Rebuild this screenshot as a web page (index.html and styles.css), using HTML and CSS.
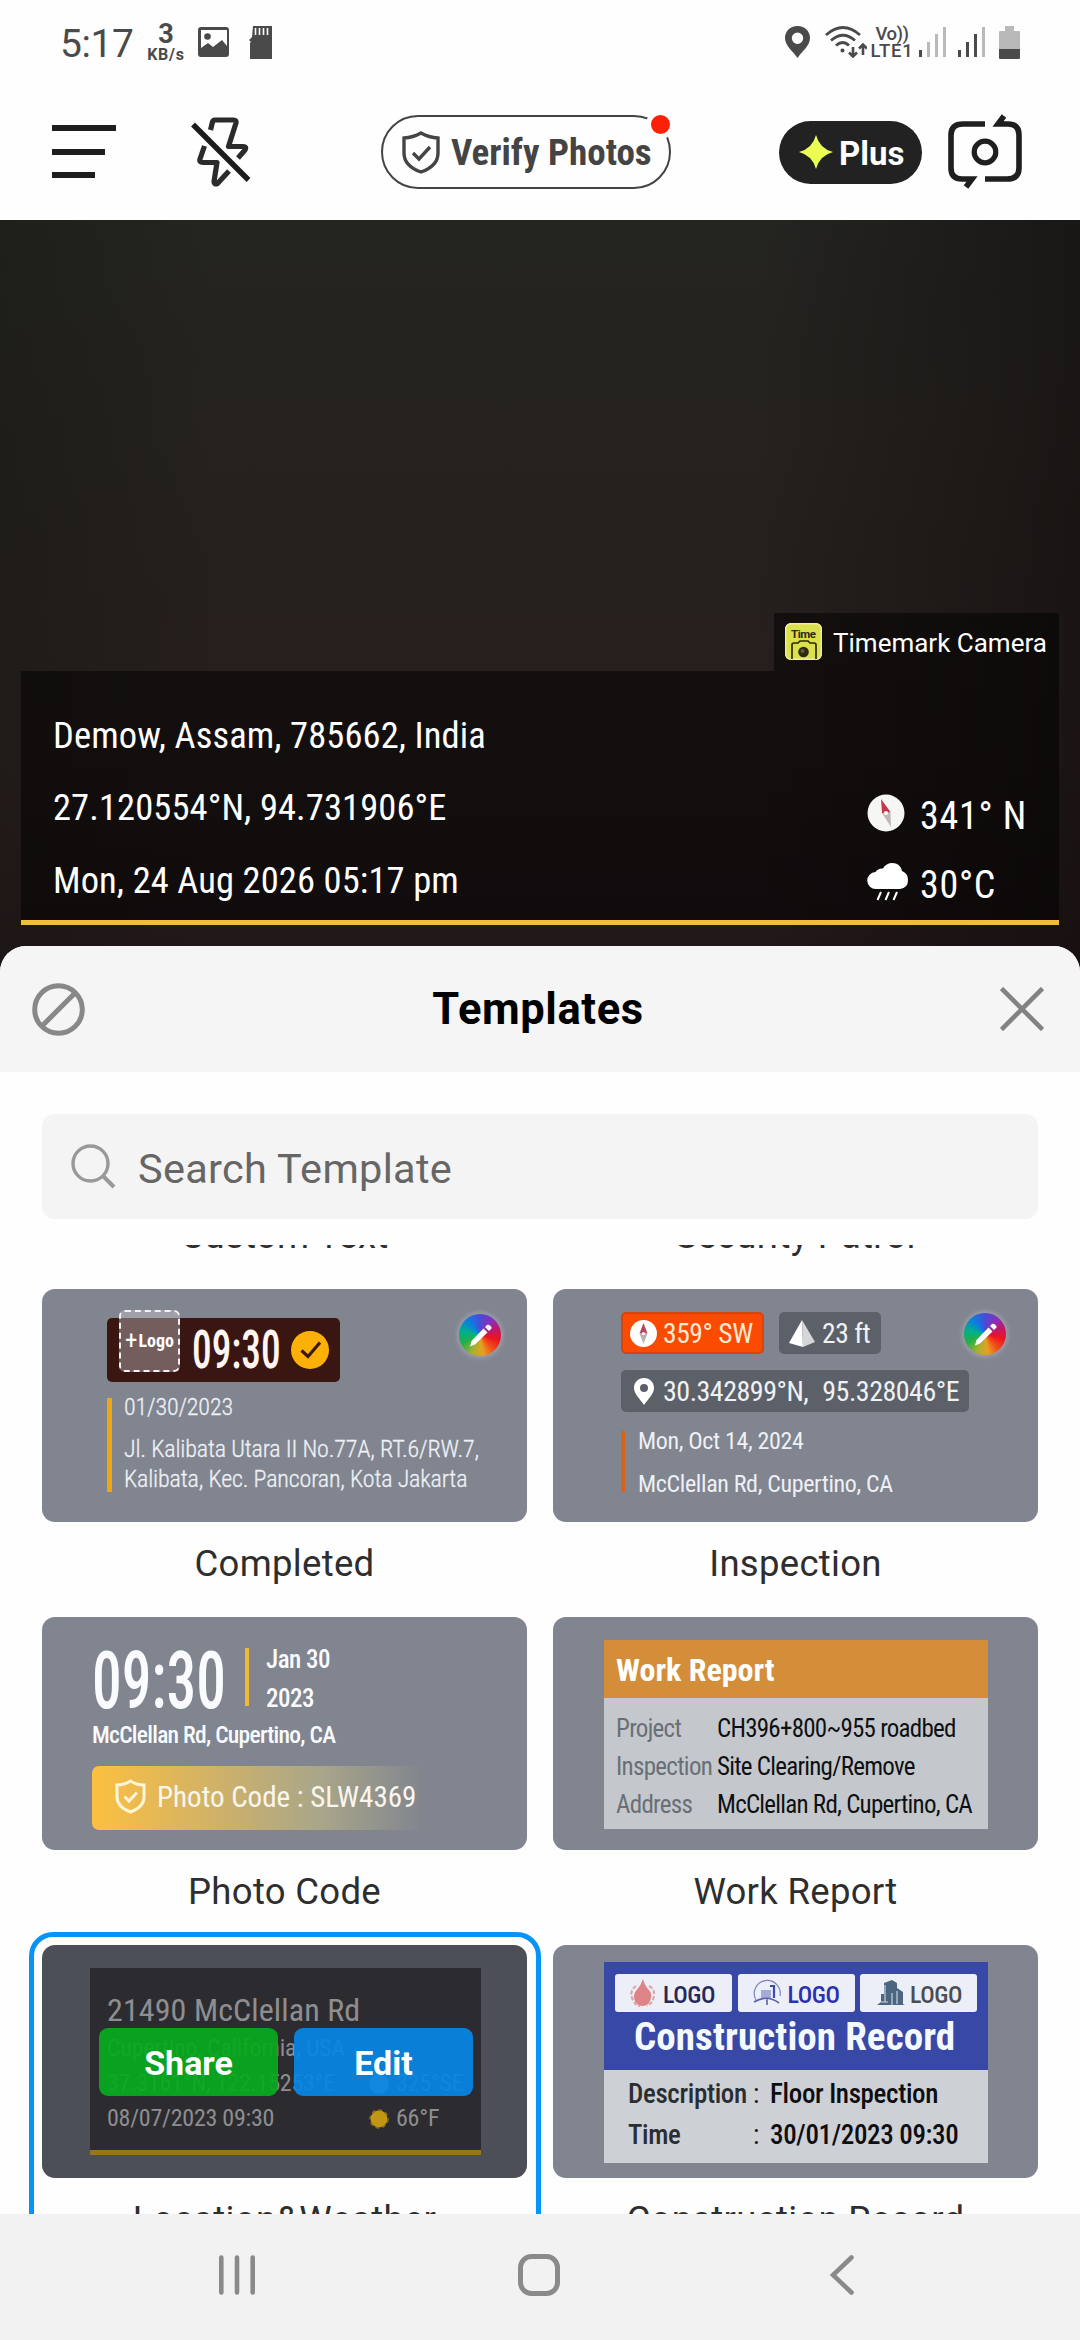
FILE: index.html
```html
<!DOCTYPE html>
<html lang="en">
<head>
<meta charset="utf-8">
<title>Templates</title>
<link rel="stylesheet" href="styles.css">
</head>
<body>
<div class="statusbar">
  <span class="time">5:17</span>
  <span class="net"><b>3</b><i>KB/s</i></span>
  <svg class="st-img" width="31" height="30" viewBox="0 0 31 30"><path fill="#4a4a4a" fill-rule="evenodd" d="M3 0h25q3 0 3 3v24q0 3-3 3H3q-3 0-3-3V3q0-3 3-3zM3 3v18l7-5 5 4 9-7 5 6V3z"/><circle cx="9.500" cy="9.500" r="3.300" fill="#4a4a4a"/></svg>
  <svg class="st-sd" width="23" height="33" viewBox="0 0 23 33"><path fill="#4a4a4a" d="M4 0h19v33H1V17l1-1-2-2 3-3z"/><path stroke="#fff" stroke-width="1.600" d="M6.500 2v7M10.500 2v7M14.500 2v7M18.500 2v7"/></svg>
  <svg class="st-pin" width="25" height="32" viewBox="0 0 25 32"><path fill="#4a4a4a" fill-rule="evenodd" d="M12.500 0C5 0 0 5.500 0 12c0 8 8 13 12.500 20C17 25 25 20 25 12 25 5.500 20 0 12.500 0zm0 6.500a5.700 5.700 0 1 1 0 11.400 5.700 5.700 0 0 1 0-11.400z"/></svg>
  <svg class="st-wifi" width="42" height="32" viewBox="0 0 42 32" fill="none" stroke="#4a4a4a" stroke-width="2.800"><path d="M1 9q17-15 34 0M6 14.500q12-10.500 24 0M11 19.500q7-6 13 0"/><circle cx="17.500" cy="24.500" r="1.300" fill="#4a4a4a" stroke-width="1.500"/><path stroke-width="2.600" d="M28 21v9M24 26.500l4 4 4-4M38 29V19M34 22.500l4-4 4 4"/></svg>
  <span class="volte"><i>Vo))</i><i>LTE1</i></span>
  <svg class="st-sig" width="28" height="30" viewBox="0 0 28 30"><path fill="#4a4a4a" d="M0 23h3v7H0z"/><path fill="#b9b9b9" d="M8 15h3v15H8zM16 7h3v23h-3zM24 0h3v30h-3z"/></svg>
  <svg class="st-sig2" width="28" height="30" viewBox="0 0 28 30"><path fill="#4a4a4a" d="M0 23h3v7H0zM8 15h3v15H8zM16 7h3v23h-3z"/><path fill="#b9b9b9" d="M24 0h3v30h-3z"/></svg>
  <svg class="st-bat" width="21" height="33" viewBox="0 0 21 33"><path fill="#b9b9b9" d="M6 0h9v5h5q1 0 1 1v17H0V6q0-1 1-1h5z"/><path fill="#4a4a4a" d="M0 23h21v9q0 1-1 1H1q-1 0-1-1z"/></svg>
</div>

<header class="topbar">
  <svg class="menu" width="64" height="54" viewBox="0 0 64 54"><path fill="#1e1e1e" d="M0 0h64v6H0zM0 24h53v6H0zM0 47h43v6H0z"/></svg>
  <svg class="flash" width="60" height="70" viewBox="0 0 60 70" fill="none" stroke="#2b2b2b" stroke-width="5.200" stroke-linejoin="round"><path d="M19.500 13l2-8Q22 3 24 3h18.500q3 0 2.500 3L37.500 29.500H52q4 0 2 3.500l-7 8M13.500 29L9 42q-1 3.500 3 3.500h14l-3 19q0 3.500 3.500 2L38 54"/><path stroke="#1c1c1c" stroke-width="5.400" d="M2 7.500L57.500 63"/></svg>
  <div class="verify">
    <svg width="38" height="43" viewBox="0 0 38 43" fill="none" stroke="#444" stroke-width="3.400"><path d="M19 2Q27 6.500 36 7v15q0 13-17 19Q2 35 2 22V7q9-.5 17-5z"/><path d="M11 22l6 6 11-12"/></svg>
    <span>Verify Photos</span>
    <em class="dot"></em>
  </div>
  <div class="plus">
    <svg width="34" height="34" viewBox="0 0 34 34"><path fill="#eaff52" d="M17 0q3.500 13.500 17 17-13.500 3.500-17 17-3.500-13.500-17-17Q13.500 13.500 17 0z"/></svg>
    <span>Plus</span>
  </div>
  <svg class="flip" width="74" height="76" viewBox="0 0 74 76" fill="none" stroke="#1f1f1f" stroke-width="5.600"><path d="M37 10H15Q3 10 3 21v33q0 11 11 11h10l-6 8M37 65h22q12 0 12-11V21q0-11-11-11H50l6-8"/><circle cx="37" cy="38" r="10.800" stroke-width="5.200"/></svg>
</header>

<main class="viewfinder">
  <div class="brand">
    <svg width="37" height="37" viewBox="0 0 37 37"><rect width="37" height="37" rx="6" fill="#dce04a"/><rect x=".7" y=".7" width="35.600" height="35.600" rx="5.500" fill="none" stroke="#eef0a0" stroke-width="1.400"/><text x="6" y="15" font-size="11.500" font-weight="700" textLength="25" fill="#2c2a10">Time</text><path d="M7 36V22q0-2 2-2h4l2-2h8l2 2h4q2 0 2 2v14" fill="none" stroke="#2c2a10" stroke-width="1.700"/><circle cx="18.500" cy="29" r="5.300" fill="#2c2a10"/><circle cx="17.500" cy="28" r="2" fill="#6a5a40"/></svg>
    <span>Timemark Camera</span>
  </div>
  <div class="stamp">
    <div class="stamp-main">
      <p>Demow, Assam, 785662, India</p>
      <p>27.120554°N, 94.731906°E</p>
      <p>Mon, 24 Aug 2026 05:17 pm</p>
    </div>
    <div class="stamp-side">
      <p><svg width="41" height="38" viewBox="0 0 41 38"><circle cx="19" cy="19" r="18.500" fill="#f6f6f4"/><path d="M14 5l9.500 13-4 2.500L15 19z" fill="#c9364a"/><path d="M24 33L15 19l8.500-1z" fill="#bfb9b6"/><circle cx="19" cy="19" r="2" fill="#fff"/></svg><span>341° N</span></p>
      <p><svg width="41" height="38" viewBox="0 0 41 38"><path fill="#fff" d="M9 26a8.500 8.500 0 0 1-.5-17Q11 5 16 5.500 19 0 25.500 0 33 0 35 8q6 2.500 6 9 0 8-8 9z"/><path stroke="#fff" stroke-width="2" d="M14 29l-3.500 8M22 29l-3.500 8M30 29l-3.500 8"/></svg><span>30°C</span></p>
    </div>
  </div>
</main>

<section class="sheet">
  <div class="sheet-head">
    <svg width="53" height="53" viewBox="0 0 53 53" fill="none" stroke="#888" stroke-width="5"><circle cx="26.500" cy="26.500" r="23.800"/><path d="M43.500 9.500l-34 34"/></svg>
    <h1>Templates</h1>
    <svg width="44" height="44" viewBox="0 0 44 44" stroke="#828282" stroke-width="4.600"><path d="M1.500 1.500l41 41M42.500 1.500l-41 41"/></svg>
  </div>
  <div class="search">
    <svg width="45" height="45" viewBox="0 0 45 45" fill="none" stroke="#999" stroke-width="3.400"><circle cx="19.500" cy="19.500" r="17.500"/><path stroke-width="4" d="M32 32l11 11"/></svg>
    <span>Search Template</span>
  </div>

  <div class="list">
    <div class="grid">
      <div class="label">Custom Text</div>
      <div class="label">Security Patrol</div>

      <article class="item">
        <div class="card completed">
          <em class="wheel"><svg width="23" height="23" viewBox="0 0 23 23" fill="#fff"><path d="M14.500 4.500l4 4L6 20.500l-5 2 1.500-5.500zM16 3l2-2q1.500-1 3.500 1t.5 3l-2 2z"/></svg></em>
          <div class="done">
            <span class="logo-slot"><b>+</b>Logo</span>
            <span class="clock">09:30</span>
            <svg width="38" height="38" viewBox="0 0 38 38"><circle cx="19" cy="19" r="19" fill="#fdb005"/><path d="M10.500 19.500l6.500 6L29 11.500" fill="none" stroke="#3a1a10" stroke-width="3.200"/></svg>
          </div>
          <div class="meta">
            <p class="date">01/30/2023</p>
            <p>Jl. Kalibata Utara II No.77A, RT.6/RW.7,</p>
            <p>Kalibata, Kec. Pancoran, Kota Jakarta</p>
          </div>
        </div>
        <div class="label">Completed</div>
      </article>

      <article class="item">
        <div class="card inspection">
          <em class="wheel"><svg width="23" height="23" viewBox="0 0 23 23" fill="#fff"><path d="M14.500 4.500l4 4L6 20.500l-5 2 1.500-5.500zM16 3l2-2q1.500-1 3.500 1t.5 3l-2 2z"/></svg></em>
          <div class="chips">
            <span class="chip hot"><svg width="27" height="27" viewBox="0 0 27 27"><circle cx="13.500" cy="13.500" r="13.500" fill="#fff"/><path d="M13.500 3l4 10.500h-8z" fill="#b5455a"/><path d="M13.500 24l4-10.500h-8z" fill="#b9b4b4"/><circle cx="13.500" cy="13.500" r="1.500" fill="#fff"/></svg>359° SW</span>
            <span class="chip alt"><svg width="26" height="27" viewBox="0 0 26 27"><path fill="#fff" d="M13 0L0 23l14 4z"/><path fill="#d4d6d8" d="M13 0l13 22-12 5z"/></svg>23 ft</span>
          </div>
          <div class="chip coords"><svg width="20" height="27" viewBox="0 0 20 27"><path fill="#fff" fill-rule="evenodd" d="M10 0C4 0 0 4.500 0 10c0 6 6 11 10 17 4-6 10-11 10-17 0-5.500-4-10-10-10zm0 6a4 4 0 1 1 0 8 4 4 0 0 1 0-8z"/></svg><span>30.342899°N,</span><span>95.328046°E</span></div>
          <div class="meta">
            <p>Mon, Oct 14, 2024</p>
            <p>McClellan Rd, Cupertino, CA</p>
          </div>
        </div>
        <div class="label">Inspection</div>
      </article>

      <article class="item">
        <div class="card photocode">
          <div class="when">
            <span class="clock">09:30</span>
            <i class="bar"></i>
            <div class="day"><p>Jan 30</p><p>2023</p></div>
          </div>
          <p class="addr">McClellan Rd, Cupertino, CA</p>
          <div class="code"><svg width="31" height="35" viewBox="0 0 31 35" fill="none" stroke="#fff6d8" stroke-width="3"><path d="M15.500 2q6 4 13.500 4v12q0 10-13.500 15Q2 28 2 18V6q7.500 0 13.500-4z"/><path d="M9.500 17.500l4.500 4.500 8-8.500"/></svg><span>Photo Code : SLW4369</span></div>
        </div>
        <div class="label">Photo Code</div>
      </article>

      <article class="item">
        <div class="card report">
          <div class="panel">
            <h2>Work Report</h2>
            <dl>
              <dt>Project</dt><dd>CH396+800~955 roadbed</dd>
              <dt>Inspection</dt><dd>Site Clearing/Remove</dd>
              <dt>Address</dt><dd>McClellan Rd, Cupertino, CA</dd>
            </dl>
          </div>
        </div>
        <div class="label">Work Report</div>
      </article>

      <article class="item selected">
        <div class="card weather">
          <div class="panel">
            <p class="street">21490 McClellan Rd</p>
            <p>Cupertino, California, USA</p>
            <p class="pair"><span>37.3161°N, 122.15253°E</span><svg width="20" height="20" viewBox="0 0 20 20"><circle cx="10" cy="10" r="10" fill="#a9a9ab"/></svg>325°SE</p>
            <p class="pair"><span>08/07/2023 09:30</span><svg width="20" height="20" viewBox="0 0 20 20"><circle cx="10" cy="10" r="8.500" fill="#c29614"/><circle cx="10" cy="10" r="9" fill="none" stroke="#8e6e16" stroke-width="1.500" stroke-dasharray="3.900 3"/></svg>66°F</p>
          </div>
          <div class="actions"><button class="share">Share</button><button class="edit">Edit</button></div>
        </div>
        <div class="label">Location&amp;Weather</div>
      </article>

      <article class="item">
        <div class="card record">
          <div class="panel">
            <div class="head">
              <div class="logos">
                <span class="l1"><svg width="31" height="28" viewBox="0 0 31 28"><path fill="#dc8488" d="M15 0q2 7 5.500 10.500Q24 14 23 19q-1.500 8-8.500 8T6 19q-.500-5 3.500-9Q13 6 15 0z"/><path fill="none" stroke="#e0a0a4" stroke-width="2" stroke-dasharray="4 2" d="M8 7Q1 12 4.500 20T12 27M21 7q6 3 5 10-1 7-7 10"/></svg>LOGO</span>
                <span class="l2"><svg width="33" height="28" viewBox="0 0 33 28"><path fill="none" stroke="#7c85c0" stroke-width="1.200" d="M5 21A13 13 0 1 1 29 17"/><path fill="#a5abd8" d="M10 11h10v8H10z"/><path fill="none" stroke="#4049a8" stroke-width="2.200" d="M19 7h4v12"/><path fill="none" stroke="#5961ad" stroke-width="1.600" d="M3 23q13-8 25 1M16 20v6"/></svg>LOGO</span>
                <span class="l3"><svg width="33" height="28" viewBox="0 0 33 28"><path fill="#4c6680" d="M11 4l8-3 5 3v5l6 4v12l2 1H4l4-3v-8h3z"/><path stroke="#c7d4e0" stroke-width="1.200" d="M12 6v17M19 14v12M24 12v13M8 23h7"/></svg>LOGO</span>
              </div>
              <h2>Construction Record</h2>
            </div>
            <dl>
              <dt>Description</dt><dd><i>:</i>Floor Inspection</dd>
              <dt>Time</dt><dd><i>:</i>30/01/2023 09:30</dd>
            </dl>
          </div>
        </div>
        <div class="label">Construction Record</div>
      </article>
    </div>
  </div>
</section>

<nav class="navbar">
  <svg class="recents" width="36" height="40" viewBox="0 0 36 40" stroke="#8a8a88" stroke-width="4.600" stroke-linecap="round"><path d="M2.300 2.500v35M18 2.500v35M33.700 2.500v35"/></svg>
  <svg class="home" width="42" height="42" viewBox="0 0 42 42"><rect x="2.500" y="2.500" width="37" height="37" rx="11" fill="none" stroke="#8a8a8a" stroke-width="5"/></svg>
  <svg class="back" width="24" height="40" viewBox="0 0 24 40"><path d="M21.500 2.500L3 20l18.500 17.500" fill="none" stroke="#8a8a8a" stroke-width="4.600" stroke-linecap="round"/></svg>
</nav>
</body>
</html>
```
FILE: styles.css
```css
* { box-sizing: border-box; margin: 0; padding: 0; }
body {
  width: 1080px;
  height: 2340px;
  overflow: hidden;
  display: flex;
  flex-direction: column;
  background: #fefefe;
  font-family: Roboto, "Liberation Sans", sans-serif;
}
svg { display: block; flex: none; }
i, em { font-style: normal; }
p, span { white-space: nowrap; }

/* status bar */
.statusbar {
  flex: none;
  height: 84px;
  display: flex;
  align-items: center;
  padding: 0 60px;
  color: #4a4a4a;
}
.time { width: 87px; padding-top: 3px; font-size: 39px; letter-spacing: -0.4px; }
.net { width: 38px; padding-top: 2px; display: flex; flex-direction: column; align-items: center; font-size: 16px; }
.net b { font-size: 27px; line-height: 23px; font-weight: 700; }
.net i { line-height: 17px; font-weight: 700; letter-spacing: 0.8px; }
.st-img { margin-left: 13px; }
.st-sd { margin-left: 20px; }
.st-pin { margin-left: auto; }
.st-wifi { margin-left: 15px; }
.volte { width: 40px; margin-left: 5px; padding-top: 2px; display: flex; flex-direction: column; align-items: center; font-size: 18.500px; font-weight: 500; }
.volte i { line-height: 17px; letter-spacing: -0.5px; }
.volte i + i { letter-spacing: 0.8px; }
.st-sig { margin-left: 7px; }
.st-sig2 { margin-left: 11px; }
.st-bat { margin-left: 13px; }

/* camera toolbar */
.topbar { flex: none; height: 136px; display: flex; align-items: center; padding-left: 52px; }
.flash { margin-left: 75px; }
.verify {
  position: relative;
  width: 290px;
  height: 74px;
  margin-left: 130px;
  padding-left: 19px;
  display: flex;
  align-items: center;
  gap: 11px;
  border: 2.500px solid #444;
  border-radius: 37px;
  font: 700 37px "Roboto Condensed", Roboto, sans-serif;
  color: #444;
}
.verify span { padding-top: 1px; }
.dot {
  position: absolute;
  right: -6px;
  top: -7px;
  width: 29px;
  height: 29px;
  border: 5px solid #fefefe;
  border-radius: 50%;
  background: #fd2008;
}
.plus {
  width: 143px;
  height: 63px;
  margin-left: 108px;
  padding-left: 20px;
  display: flex;
  align-items: center;
  gap: 6px;
  border-radius: 32px;
  background: #222;
  color: #fff;
  font-weight: 700;
  font-size: 33px;
}
.plus span { padding-top: 2px; }
.flip { margin-left: 26px; }

/* viewfinder with watermark */
.viewfinder {
  flex: none;
  height: 752px;
  padding: 393px 21px 0;
  display: flex;
  flex-direction: column;
  background: linear-gradient(90deg, rgba(18, 20, 14, .3), transparent 20%, transparent 70%, rgba(12, 8, 8, .45)), linear-gradient(#242421, #25201d 45%, #271e1d 72%, #211618);
  color: #fff;
}
.brand {
  width: 285px;
  height: 58px;
  align-self: flex-end;
  display: flex;
  align-items: center;
  padding: 2px 0 0 11px;
  gap: 11px;
  background: rgba(0, 0, 0, .5);
  font-size: 26px;
}
.brand svg { margin-top: -3px; }
.stamp {
  height: 254px;
  display: flex;
  justify-content: space-between;
  background: rgba(0, 0, 0, .5);
  border-bottom: 5px solid #f2bd3c;
  font-family: "Roboto Condensed", Roboto, sans-serif;
}
.stamp-main { padding: 29px 0 0 32px; font-size: 36.500px; letter-spacing: 0.1px; }
.stamp-main p { line-height: 72.300px; }
.stamp-side { width: 192px; padding-top: 110px; font-size: 38px; letter-spacing: 0.7px; }
.stamp-side p { height: 69px; display: flex; align-items: center; gap: 12px; }
.stamp-side svg { margin-top: -5px; }

/* bottom sheet */
.sheet {
  position: relative;
  flex: none;
  height: 1268px;
  margin-top: -26px;
  border-radius: 26px 26px 0 0;
  background: #fefefe;
  overflow: hidden;
}
.sheet-head {
  height: 126px;
  padding: 0 36px 0 32px;
  display: flex;
  align-items: center;
  justify-content: space-between;
  background: #f5f5f5;
}
.sheet-head h1 { margin-left: -9px; font-size: 43.500px; font-weight: 700; letter-spacing: 0.6px; color: #000; }
.search {
  height: 105px;
  margin: 42px 42px 26px;
  padding-left: 29px;
  display: flex;
  align-items: center;
  gap: 22px;
  border-radius: 12px;
  background: #f4f4f4;
  color: #666;
  font-size: 41.500px;
  letter-spacing: 0.3px;
}
.search span { padding-top: 3px; }
.list { height: 969px; overflow: hidden; }
.grid {
  margin-top: -51px;
  padding: 0 42px;
  display: grid;
  grid-template-columns: 485px 485px;
  column-gap: 26px;
}
.label {
  height: 95px;
  line-height: 83px;
  text-align: center;
  font-size: 36.500px;
  letter-spacing: 0.3px;
  color: #2e2e2e;
  white-space: nowrap;
}
.item { position: relative; }
.selected::before {
  content: "";
  position: absolute;
  inset: -13px -14px 0 -13px;
  border: 5px solid #0794f8;
  border-radius: 24px;
}

/* thumbnails */
.card {
  position: relative;
  height: 233px;
  border-radius: 13px;
  background: #80858f;
  color: #eef0f6;
  font-family: "Roboto Condensed", Roboto, sans-serif;
  font-size: 24px;
  overflow: hidden;
}
.clock {
  display: block;
  font-weight: 500;
  transform: scaleX(.742);
  transform-origin: 0 50%;
}
.wheel {
  position: absolute;
  width: 42px;
  height: 42px;
  display: flex;
  align-items: center;
  justify-content: center;
  border-radius: 50%;
  background: conic-gradient(#4a4ad8, #8a2fb8 40deg, #c01868 70deg, #ee1420 105deg, #f0501a 140deg, #e8a020 170deg, #a8b030 205deg, #20b048 245deg, #00b088 280deg, #0a80e0 320deg, #4a4ad8);
  box-shadow: 0 0 5px 2px rgba(205, 190, 215, .45);
}
.completed { padding: 29px 0 0 65px; }
.completed .wheel { right: 26px; top: 25px; }
.done {
  width: 233px;
  height: 64px;
  display: flex;
  align-items: center;
  padding-left: 12px;
  border-radius: 5px;
  background: #3a1613;
}
.logo-slot {
  width: 61px;
  height: 62px;
  margin: -19px 12px 0 0;
  display: flex;
  align-items: center;
  justify-content: center;
  border: 2.500px dashed #f5f2f4;
  border-radius: 6px;
  background: rgba(205, 200, 205, .4);
  color: #fff;
  font-size: 18px;
  font-weight: 700;
}
.logo-slot b { font-size: 25px; font-weight: 400; margin-right: 1px; }
.done .clock { width: 97px; font-size: 53px; color: #fff6f2; }
.done svg { margin-left: 2px; }
.completed .meta {
  width: 400px;
  height: 94px;
  margin-top: 16px;
  padding-left: 12px;
  border-left: 5px solid #eda713;
  font-weight: 300;
  letter-spacing: -0.15px;
}
.completed .meta p { line-height: 30px; -webkit-text-stroke: 0.3px #eef0f6; }
.completed .meta .date { line-height: 18px; margin-bottom: 18px; }

.inspection { padding: 23px 0 0 68px; }
.inspection .wheel { right: 32px; top: 24px; }
.chips { display: flex; gap: 15px; }
.chip {
  height: 42px;
  display: flex;
  align-items: center;
  padding-left: 9px;
  gap: 6px;
  border-radius: 5px;
  background: #5c6169;
  font-size: 27.500px;
  letter-spacing: -0.4px;
  color: #f0f1f3;
}
.hot { width: 143px; background: #fb4a02; border: 2px solid #d9440c; padding-left: 7px; color: #ffe9d0; }
.alt { width: 102px; padding-left: 10px; gap: 7px; }
.coords { width: 348px; margin-top: 16px; padding-left: 13px; gap: 9px; font-size: 28px; letter-spacing: -0.5px; }
.coords span + span { margin-left: 5px; }
.inspection .meta {
  height: 61px;
  margin-top: 19px;
  padding-left: 13px;
  border-left: 4px solid #d8641c;
  letter-spacing: -0.35px;
}
.inspection .meta p { line-height: 20px; margin-bottom: 23px; }

.photocode { padding: 23px 0 0 50px; }
.when { height: 78px; display: flex; align-items: center; }
.photocode .clock { width: 153px; font-size: 80px; color: #fafbff; line-height: 78px; padding-top: 3px; }
.bar { width: 4px; height: 58px; margin: -5px 17px 0 0; background: #f0b93a; }
.day { font-size: 25px; font-weight: 500; letter-spacing: -0.5px; line-height: 39px; color: #fafbff; }
.addr { line-height: 35px; font-size: 23.500px; font-weight: 500; letter-spacing: -0.72px; color: #fafbff; }
.code {
  width: 350px;
  height: 64px;
  margin-top: 13px;
  padding: 0 0 3px 23px;
  display: flex;
  align-items: center;
  gap: 11px;
  border-radius: 7px;
  background: linear-gradient(90deg, #fcc040, #d0b268 35%, #a9a68a 65%, rgba(128, 133, 143, 0) 95%);
  font-size: 29px;
  color: #faf6ee;
}

.report { padding: 23px 0 0 51px; }
.report .panel { width: 384px; height: 189px; background: #c4c8cd; letter-spacing: -0.75px; }
.report h2 { height: 58px; line-height: 60px; padding-left: 12px; background: #d48e3a; color: #fff; font-size: 32px; letter-spacing: 0; }
.report dl { display: grid; grid-template-columns: 101px 1fr; padding: 12px 0 0 12px; font-size: 25px; line-height: 38px; white-space: nowrap; }
.report dt { color: #6a6f76; letter-spacing: -0.7px; }
.report dd { color: #0e1012; }

.weather { padding: 23px 0 0 48px; background: #4c4f57; }
.weather .panel {
  width: 391px;
  height: 187px;
  padding: 21px 0 0 17px;
  background: #2c2c30;
  border-bottom: 5px solid #987421;
  color: #8e8e90;
  letter-spacing: -0.25px;
}
.weather .street { font-size: 32px; line-height: 42px; letter-spacing: 0.1px; }
.weather p { line-height: 35px; }
.pair { display: flex; align-items: center; gap: 7px; }
.pair span { width: 255px; }
.actions { position: absolute; left: 57px; top: 83px; display: flex; gap: 16px; }
.actions button {
  width: 179px;
  height: 68px;
  padding-top: 2px;
  border: 0;
  border-radius: 9px;
  color: #fff;
  font: 700 34px Roboto, sans-serif;
}
.share { background: rgba(6, 170, 30, .93); }
.edit { background: rgba(8, 133, 228, .93); }

.record { padding: 17px 0 0 51px; }
.record .panel { width: 384px; height: 201px; background: #cdd0d5; }
.record .head { height: 108px; padding: 12px 0 0 11px; background: #3848a6; }
.logos { display: flex; gap: 5.500px; }
.logos span {
  width: 117px;
  height: 38px;
  padding: 3px 0 0 13px;
  display: flex;
  align-items: center;
  gap: 4px;
  border-radius: 3px;
  background: #eceff8;
  font-weight: 500;
  letter-spacing: -0.4px;
}
.logos svg { margin-top: -3px; }
.l1 { color: #26285a; }
.l2 { color: #2c30b0; }
.l3 { color: #4c4e54; }
.record h2 { padding-left: 19px; line-height: 50px; font-size: 39px; letter-spacing: 0.1px; color: #f4f9ff; white-space: nowrap; }
.record dl {
  display: grid;
  grid-template-columns: 125px 1fr;
  padding: 4px 0 0 24px;
  font-size: 27px;
  font-weight: 500;
  line-height: 41px;
  letter-spacing: -0.35px;
  white-space: nowrap;
}
.record dt { color: #2a2d31; }
.record dd { display: flex; color: #0c0e12; }
.record dd i { width: 17px; font-weight: 400; }

/* system navigation */
.navbar { flex: none; height: 126px; display: flex; align-items: center; padding: 0 0 4px 219px; background: #f2f2f2; }
.home { margin-left: 263px; }
.back { margin-left: 270px; }
```
